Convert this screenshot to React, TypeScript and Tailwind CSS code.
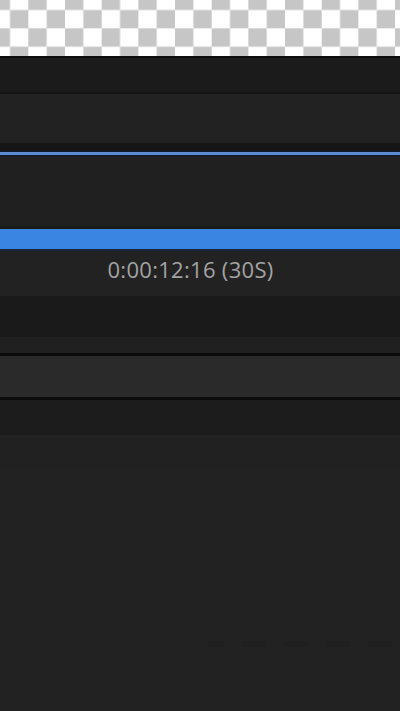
export default function App() {
  return (
    <div className="w-[400px] h-[711px] flex flex-col bg-[#222222] overflow-hidden">
      {/* transparency checkerboard */}
      <svg className="block w-full h-[56px] shrink-0" width="400" height="56">
        <defs>
          <pattern id="chk" x="-8.33" y="-8.33" width="36.67" height="36.67" patternUnits="userSpaceOnUse">
            <rect width="36.67" height="36.67" fill="#ffffff" />
            <rect width="18.33" height="18.33" fill="#c6c6c6" />
            <rect x="18.33" y="18.33" width="18.33" height="18.33" fill="#c6c6c6" />
          </pattern>
        </defs>
        <rect width="400" height="56" fill="url(#chk)" />
      </svg>

      <div className="h-[2px] shrink-0 bg-[#0e0e0e]" />
      <div className="h-[34px] shrink-0 bg-[#1b1b1b]" />
      <div className="h-[2px] shrink-0 bg-[#151515]" />
      <div className="h-[49px] shrink-0 bg-[#222222]" />
      <div className="h-[8px] shrink-0 bg-[#161616]" />

      {/* work area line */}
      <div className="h-[1px] shrink-0 bg-[#0d1a2e]" />
      <div className="h-[3px] shrink-0 bg-[#5e8bd0]" />
      <div className="h-[1px] shrink-0 bg-[#0d1a2e]" />

      <div className="h-[70px] shrink-0 bg-[#202020]" />
      <div className="h-[3px] shrink-0 bg-[#1c1919]" />

      {/* duration bar */}
      <div className="h-[20px] shrink-0 bg-[#3b85e2]" />
      <div className="h-[2px] shrink-0 bg-[#18263b]" />

      <div className="h-[45px] shrink-0 bg-[#222222] flex justify-center pr-[19px] pt-[4px]">
        <span className="text-[22px] leading-[29px] font-medium text-[#a3a3a3] tracking-[0.3px] font-['Open_Sans',sans-serif]">
          0:00:12:16 (30S)
        </span>
      </div>

      <div className="h-[41px] shrink-0 bg-[#1a1a1a]" />
      <div className="h-[16px] shrink-0 bg-[#202020]" />
      <div className="h-[3px] shrink-0 bg-[#0b0b0b]" />
      <div className="h-[41px] shrink-0 bg-[#2a2a2a]" />
      <div className="h-[3px] shrink-0 bg-[#0b0b0b]" />
      <div className="h-[35px] shrink-0 bg-[#1c1c1c]" />
      <div className="h-[35px] shrink-0 bg-[#212121]" />

      <div className="flex-1 bg-[#222222] flex flex-col justify-end pb-[64px]">
        <div className="flex justify-end gap-[18px] pr-[8px] h-[6px]">
          <div className="w-[16px] bg-[#202020]" />
          <div className="w-[24px] bg-[#202020]" />
          <div className="w-[24px] bg-[#202020]" />
          <div className="w-[24px] bg-[#202020]" />
          <div className="w-[24px] bg-[#202020]" />
        </div>
      </div>
    </div>
  )
}
